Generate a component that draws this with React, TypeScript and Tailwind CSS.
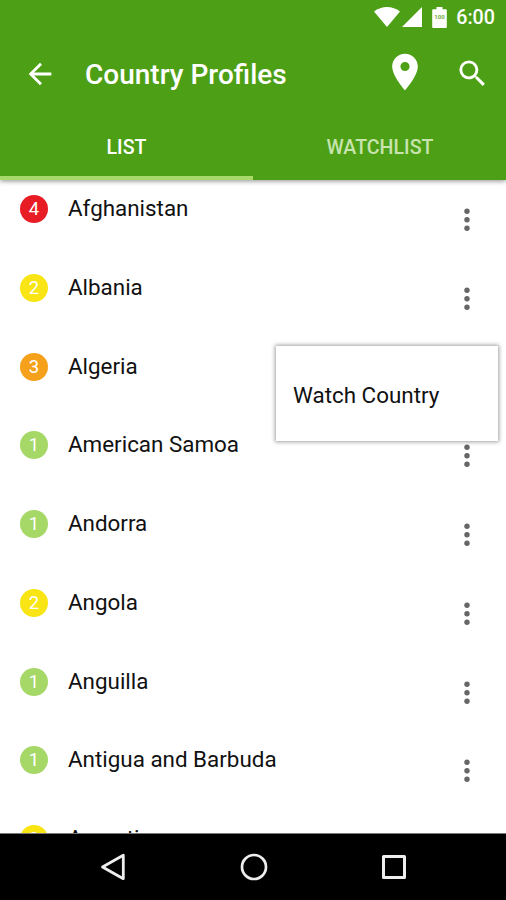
import React from "react";

type Country = {
  name: string;
  level: number;
};

const levelColors: Record<number, string> = {
  1: "bg-[#a5d867]",
  2: "bg-[#f8e513]",
  3: "bg-[#f5a11c]",
  4: "bg-[#e81c24]",
};

const countries: Country[] = [
  { name: "Afghanistan", level: 4 },
  { name: "Albania", level: 2 },
  { name: "Algeria", level: 3 },
  { name: "American Samoa", level: 1 },
  { name: "Andorra", level: 1 },
  { name: "Angola", level: 2 },
  { name: "Anguilla", level: 1 },
  { name: "Antigua and Barbuda", level: 1 },
  { name: "Argentina", level: 2 },
];

const StatusBar: React.FC = () => (
  <div className="flex h-[34px] items-start justify-end pr-[11px] pt-[7px]">
    <svg className="h-5 w-[26px]" viewBox="0 0 26 20" fill="#fff">
      <path d="M0 4.6C7.5-1.5 18.5-1.5 26 4.6L13 20Z" />
    </svg>
    <svg className="ml-[2px] h-5 w-5" viewBox="0 0 20 20" fill="#fff">
      <path d="M20 0v20H0Z" />
    </svg>
    <svg className="ml-[10px] h-[21px] w-[15px]" viewBox="0 0 15 21">
      <path
        d="M4.5 0h6v2.3h3.1c.8 0 1.2.4 1.2 1.2v16.2c0 .8-.4 1.3-1.2 1.3H1.4c-.8 0-1.2-.5-1.2-1.3V3.5c0-.8.4-1.2 1.2-1.2h3.1Z"
        fill="#fff"
      />
      <text
        x="7.5"
        y="12.3"
        textAnchor="middle"
        fontSize="6"
        fontWeight="700"
        fill="#6fac45"
        className="font-['Roboto',sans-serif]"
      >
        100
      </text>
    </svg>
    <span className="ml-[9px] mt-[1px] text-[19.7px] font-medium leading-5">
      6:00
    </span>
  </div>
);

const Header: React.FC = () => (
  <header className="relative z-10 h-[180px] bg-[#4da016] text-white shadow-[0_1px_5px_rgba(0,0,0,0.45)]">
    <StatusBar />
    <div className="flex h-[79px] items-center pl-[23px] pr-4">
      <svg className="h-[34px] w-[34px]" viewBox="0 0 24 24" fill="#fff">
        <path d="M20 11H7.83l5.59-5.59L12 4l-8 8 8 8 1.41-1.41L7.83 13H20v-2z" />
      </svg>
      <h1 className="ml-7 mt-[3px] text-[28px] font-medium leading-8">
        Country Profiles
      </h1>
      <svg
        className="mb-[3px] ml-auto h-[44px] w-[44px]"
        viewBox="0 0 24 24"
        fill="#fff"
      >
        <path d="M12 2C8.13 2 5 5.13 5 9c0 5.25 7 13 7 13s7-7.75 7-13c0-3.87-3.13-7-7-7zm0 9.5a2.5 2.5 0 0 1 0-5 2.5 2.5 0 0 1 0 5z" />
      </svg>
      <svg className="ml-7 h-[35px] w-[35px]" viewBox="0 0 24 24" fill="#fff">
        <path d="M15.5 14h-.79l-.28-.27A6.471 6.471 0 0 0 16 9.5 6.5 6.5 0 1 0 9.5 16c1.61 0 3.09-.59 4.23-1.57l.27.28v.79l5 4.99L20.49 19l-4.99-5zm-6 0C7.01 14 5 11.99 5 9.5S7.01 5 9.5 5 14 7.01 14 9.5 11.99 14 9.5 14z" />
      </svg>
    </div>
    <div className="grid h-[67px] grid-cols-2 text-center text-[19.6px] font-medium">
      <div className="border-b-4 border-[#a9d86b] pt-[21px] leading-7">
        LIST
      </div>
      <div className="pl-[1px] pt-[21px] leading-7 text-[#c8e4ae]">
        WATCHLIST
      </div>
    </div>
  </header>
);

const CountryRow: React.FC<Country> = ({ name, level }) => (
  <li className="flex h-[78.75px] shrink-0 items-start pl-5 pr-[36px]">
    <span
      className={`mt-[15px] h-7 w-7 rounded-full text-center text-[18.5px] leading-[29px] text-white ${levelColors[level]}`}
    >
      {level}
    </span>
    <span className="ml-5 mt-[14px] text-[22.4px] leading-7 text-[#111]">
      {name}
    </span>
    <svg
      className="ml-auto mt-[28px] h-6 w-[6px]"
      viewBox="0 0 6 24"
      fill="#666"
    >
      <circle cx="3" cy="3.3" r="2.7" />
      <circle cx="3" cy="11.8" r="2.7" />
      <circle cx="3" cy="20.3" r="2.7" />
    </svg>
  </li>
);

const NavigationBar: React.FC = () => (
  <nav className="grid h-[67px] shrink-0 grid-cols-[113px_281px_112px] border-t border-[#777] bg-black pt-[19px]">
    <svg
      className="-mr-[14px] h-7 w-7 justify-self-end"
      viewBox="0 0 28 28"
      fill="none"
      stroke="#eee"
      strokeWidth="2.8"
      strokeLinejoin="round"
    >
      <path d="M24.3 2.3v23.4L3.5 14Z" />
    </svg>
    <svg
      className="h-7 w-7 justify-self-center"
      viewBox="0 0 28 28"
      fill="none"
      stroke="#eee"
      strokeWidth="2.7"
    >
      <circle cx="14" cy="14" r="12" />
    </svg>
    <svg
      className="-ml-[14px] h-7 w-7"
      viewBox="0 0 28 28"
      fill="none"
      stroke="#eee"
      strokeWidth="3"
      strokeLinejoin="round"
    >
      <rect x="3.5" y="3.5" width="21" height="21" />
    </svg>
  </nav>
);

const App: React.FC = () => {
  return (
    <div className="relative flex h-[900px] w-[506px] flex-col overflow-hidden bg-white font-['Roboto',sans-serif]">
      <Header />
      <ul className="flex min-h-0 flex-1 flex-col overflow-hidden">
        {countries.map((country) => (
          <CountryRow key={country.name} {...country} />
        ))}
      </ul>
      <NavigationBar />
      {/* Overflow menu opened from the Algeria row */}
      <div className="absolute left-[276px] top-[346px] flex h-[95px] w-[222px] items-center bg-white pl-[17px] pt-[4px] text-[22.4px] text-[#111] shadow-[0_0_4px_1px_rgba(0,0,0,0.38)]">
        Watch Country
      </div>
    </div>
  );
};

export default App;
